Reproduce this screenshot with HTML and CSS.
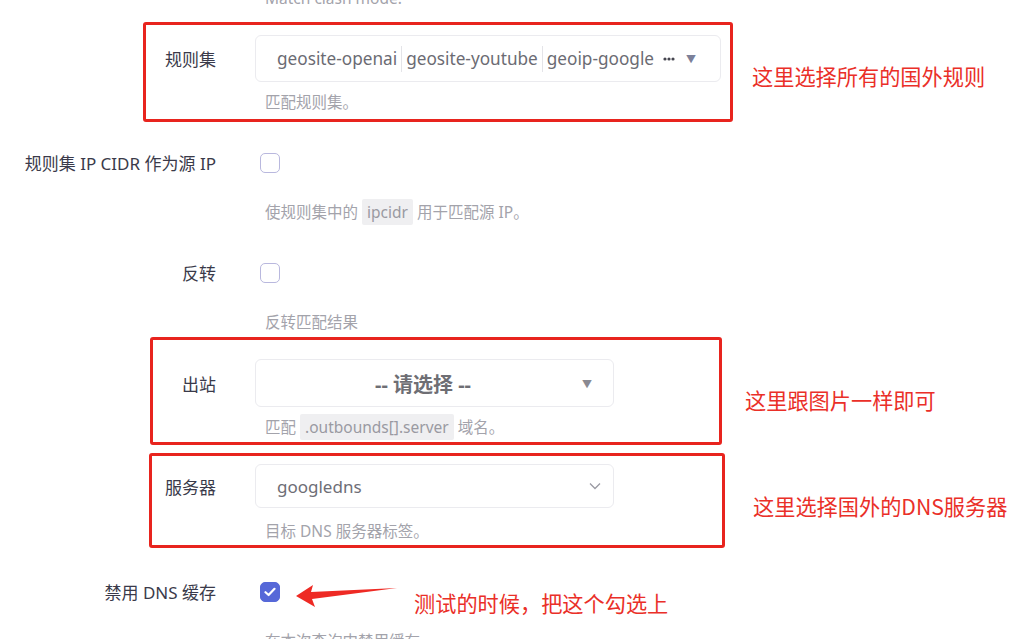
FILE: index.html
```html
<!DOCTYPE html>
<html lang="zh-CN">
<head>
<meta charset="utf-8">
<title>DNS 规则</title>
<link rel="stylesheet" href="styles.css">
</head>
<body>
<div class="page">
  <div class="prev-tail"><div class="help">Match clash mode.</div></div>

  <div class="row">
    <div class="label">规则集</div>
    <div class="dropdown multi">
      <span class="tag">geosite-openai</span><span class="tag">geosite-youtube</span><span class="tag">geoip-google</span>
      <svg class="more" width="12" height="4" viewBox="0 0 12 4"><circle cx="2" cy="2" r="1.6" fill="#45454f"/><circle cx="6" cy="2" r="1.6" fill="#45454f"/><circle cx="10" cy="2" r="1.6" fill="#45454f"/></svg>
      <span class="caret">▼</span>
    </div>
    <div class="help tight">匹配规则集。</div>
  </div>

  <div class="row">
    <div class="label">规则集 IP CIDR 作为源 IP</div>
    <div class="check-wrap"><span class="checkbox"></span></div>
    <div class="help loose">使规则集中的 <code>ipcidr</code> 用于匹配源 IP。</div>
  </div>

  <div class="row">
    <div class="label">反转</div>
    <div class="check-wrap"><span class="checkbox"></span></div>
    <div class="help loose">反转匹配结果</div>
  </div>

  <div class="row">
    <div class="label">出站</div>
    <div class="dropdown single">
      <span class="placeholder">-- 请选择 --</span>
      <span class="caret">▼</span>
    </div>
    <div class="help tight">匹配 <code>.outbounds[].server</code> 域名。</div>
  </div>

  <div class="row">
    <div class="label">服务器</div>
    <div class="select">
      <span class="value">googledns</span>
      <svg class="chevron" width="12" height="8" viewBox="0 0 12 8"><path d="M1 1.5 L6 6.5 L11 1.5" fill="none" stroke="#9a9aa3" stroke-width="1.3"/></svg>
    </div>
    <div class="help mid">目标 DNS 服务器标签。</div>
  </div>

  <div class="row">
    <div class="label">禁用 DNS 缓存</div>
    <div class="check-wrap"><span class="checkbox checked"><svg width="12" height="10" viewBox="0 0 12 10"><path d="M1.5 5.2 L4.6 8 L10.5 1.8" fill="none" stroke="#fff" stroke-width="2.2" stroke-linecap="round" stroke-linejoin="round"/></svg></span></div>
    <div class="help loose">在本次查询中禁用缓存。</div>
  </div>
</div>

<div class="mark box1"></div>
<div class="mark box2"></div>
<div class="mark box3"></div>

<div class="note note1">这里选择所有的国外规则</div>
<div class="note note2">这里跟图片一样即可</div>
<div class="note note3">这里选择国外的DNS服务器</div>
<div class="note note4">测试的时候，把这个勾选上</div>

<svg class="arrow" width="110" height="30" viewBox="0 0 110 30">
  <polygon points="5,16 22,5 20,12 106,8 21,19 24,27" fill="#ee2a24"/>
</svg>
</body>
</html>
```

FILE: styles.css
```css
html, body {
  margin: 0;
  padding: 0;
  background: #ffffff;
}

body {
  width: 1024px;
  height: 639px;
  overflow: hidden;
  position: relative;
  font-family: "Noto Sans", "Noto Sans CJK SC", sans-serif;
  color: #3c3c4a;
}

.page {
  display: flex;
  flex-direction: column;
}

.prev-tail {
  height: 8px;
  overflow: hidden;
  padding-left: 255px;
  display: flex;
  align-items: flex-end;
}

.row {
  display: grid;
  grid-template-columns: 216px 1fr;
  column-gap: 39px;
  margin-top: 27px;
}

.row > .label,
.row > .dropdown,
.row > .select,
.row > .check-wrap {
  grid-row: 1;
}

.row > .help {
  grid-column: 2;
  grid-row: 2;
}

.label {
  grid-column: 1;
  align-self: center;
  text-align: right;
  font-size: 17px;
  color: #3a3a4a;
  white-space: nowrap;
}

.help {
  font-size: 15.5px;
  line-height: 20px;
  color: #a3a3ab;
  padding-left: 10px;
  white-space: nowrap;
}

.help.tight { margin-top: 10px; }
.help.mid { margin-top: 13px; }
.help.loose { margin-top: 16px; }

code {
  font-family: "Noto Sans", sans-serif;
  font-size: 15.5px;
  background: #efeff1;
  color: #9a9aa2;
  padding: 2px 5px;
  border-radius: 2px;
}

.dropdown,
.select {
  grid-column: 2;
  box-sizing: border-box;
  border: 1px solid #ebebef;
  border-radius: 6px;
  background: #fff;
  display: flex;
  align-items: center;
}

.dropdown.multi {
  width: 466px;
  height: 47px;
  padding-left: 21px;
  font-size: 17.2px;
  color: #6b6b73;
}

.tag {
  line-height: 26px;
  padding: 0 4px 0 4px;
  border-right: 1px solid #e4e4e8;
}

.tag:first-child {
  padding-left: 0;
}

.tag:nth-of-type(3) {
  border-right: none;
}

.more {
  margin-left: 5px;
}

.caret {
  font-size: 10px;
  color: #7c8099;
  margin-left: 11px;
}

.dropdown.single {
  width: 359px;
  height: 48px;
  padding-right: 21px;
}

.placeholder {
  flex: 1;
  text-align: center;
  font-size: 20px;
  font-weight: 700;
  color: #6e6e74;
  padding-left: 8px;
}

.dropdown.single .caret {
  margin-left: 0;
  color: #8a8a92;
}

.select {
  width: 359px;
  height: 44px;
  padding: 0 12px 0 21px;
  justify-content: space-between;
  font-size: 17px;
  color: #6e6e76;
}

.check-wrap {
  grid-column: 2;
  height: 47px;
  display: flex;
  align-items: center;
  padding-left: 5px;
}

.checkbox {
  box-sizing: border-box;
  width: 20px;
  height: 20px;
  border: 1.5px solid #b9b8de;
  border-radius: 5px;
  background: #fff;
  display: flex;
  align-items: center;
  justify-content: center;
}

.checkbox.checked {
  background: #5668d8;
  border-color: #5668d8;
}

.mark {
  position: absolute;
  box-sizing: border-box;
  border: 3px solid #e8241e;
  border-radius: 3px;
}

.box1 { left: 143px; top: 22px; width: 590px; height: 100px; }
.box2 { left: 150px; top: 337px; width: 572px; height: 108px; }
.box3 { left: 149px; top: 453px; width: 576px; height: 95px; }

.note {
  position: absolute;
  font-family: "Noto Sans CJK SC", sans-serif;
  font-size: 21.2px;
  line-height: 24px;
  color: #ea2f28;
  white-space: nowrap;
}

.note1 { left: 752px; top: 64px; }
.note2 { left: 745px; top: 388px; }
.note3 { left: 753px; top: 494px; }
.note4 { left: 414px; top: 591px; }

.arrow {
  position: absolute;
  left: 291px;
  top: 580px;
}
```
